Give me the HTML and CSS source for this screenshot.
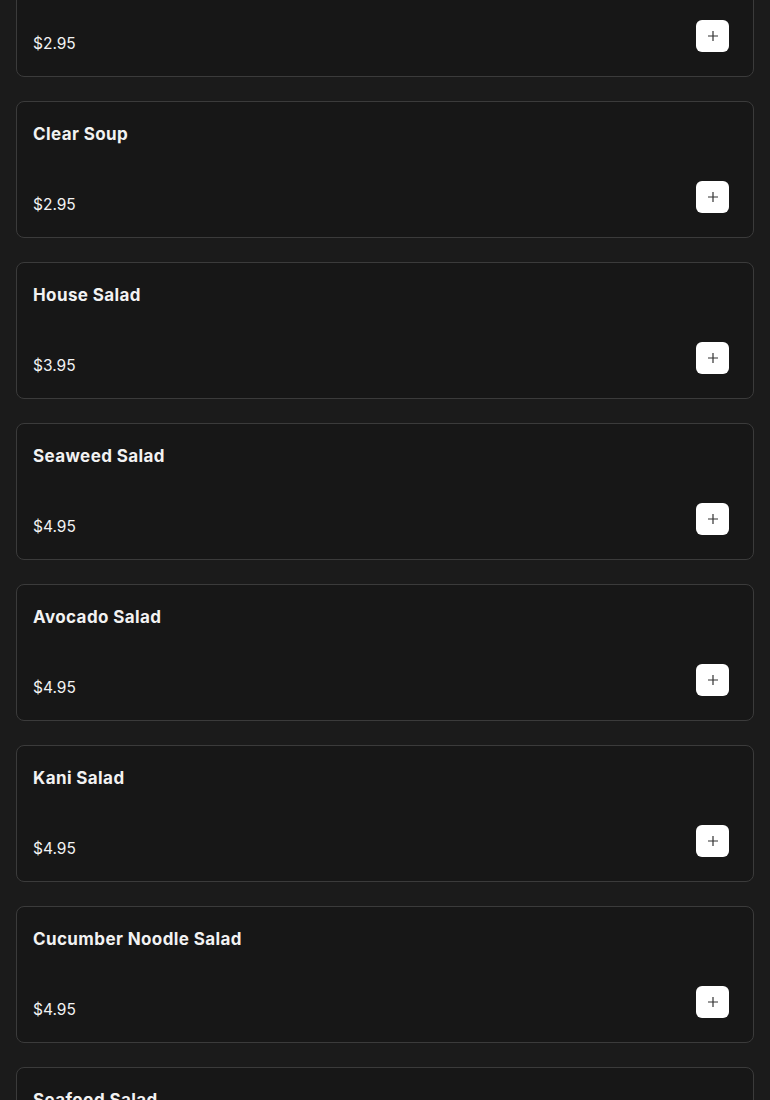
FILE: index.html
```html
<!DOCTYPE html>
<html lang="en">
<head>
    <meta charset="UTF-8">
    <meta name="viewport" content="width=device-width, initial-scale=1.0">
    <title>Menu</title>
    <link rel="stylesheet" href="styles.css">
</head>
<body>
    <div class="menu-list">
        <div class="item">
            <h3 class="item-name">Miso Soup</h3>
            <div class="item-foot">
                <span class="item-price">$2.95</span>
                <button class="add-btn" aria-label="Add"><svg viewBox="0 0 12 12" width="12" height="12"><path d="M6 1v10M1 6h10" stroke="#333" stroke-width="1.2" fill="none"/></svg></button>
            </div>
        </div>
        <div class="item">
            <h3 class="item-name">Clear Soup</h3>
            <div class="item-foot">
                <span class="item-price">$2.95</span>
                <button class="add-btn" aria-label="Add"><svg viewBox="0 0 12 12" width="12" height="12"><path d="M6 1v10M1 6h10" stroke="#333" stroke-width="1.2" fill="none"/></svg></button>
            </div>
        </div>
        <div class="item">
            <h3 class="item-name">House Salad</h3>
            <div class="item-foot">
                <span class="item-price">$3.95</span>
                <button class="add-btn" aria-label="Add"><svg viewBox="0 0 12 12" width="12" height="12"><path d="M6 1v10M1 6h10" stroke="#333" stroke-width="1.2" fill="none"/></svg></button>
            </div>
        </div>
        <div class="item">
            <h3 class="item-name">Seaweed Salad</h3>
            <div class="item-foot">
                <span class="item-price">$4.95</span>
                <button class="add-btn" aria-label="Add"><svg viewBox="0 0 12 12" width="12" height="12"><path d="M6 1v10M1 6h10" stroke="#333" stroke-width="1.2" fill="none"/></svg></button>
            </div>
        </div>
        <div class="item">
            <h3 class="item-name">Avocado Salad</h3>
            <div class="item-foot">
                <span class="item-price">$4.95</span>
                <button class="add-btn" aria-label="Add"><svg viewBox="0 0 12 12" width="12" height="12"><path d="M6 1v10M1 6h10" stroke="#333" stroke-width="1.2" fill="none"/></svg></button>
            </div>
        </div>
        <div class="item">
            <h3 class="item-name">Kani Salad</h3>
            <div class="item-foot">
                <span class="item-price">$4.95</span>
                <button class="add-btn" aria-label="Add"><svg viewBox="0 0 12 12" width="12" height="12"><path d="M6 1v10M1 6h10" stroke="#333" stroke-width="1.2" fill="none"/></svg></button>
            </div>
        </div>
        <div class="item">
            <h3 class="item-name">Cucumber Noodle Salad</h3>
            <div class="item-foot">
                <span class="item-price">$4.95</span>
                <button class="add-btn" aria-label="Add"><svg viewBox="0 0 12 12" width="12" height="12"><path d="M6 1v10M1 6h10" stroke="#333" stroke-width="1.2" fill="none"/></svg></button>
            </div>
        </div>
        <div class="item">
            <h3 class="item-name">Seafood Salad</h3>
            <div class="item-foot">
                <span class="item-price">$6.95</span>
                <button class="add-btn" aria-label="Add"><svg viewBox="0 0 12 12" width="12" height="12"><path d="M6 1v10M1 6h10" stroke="#333" stroke-width="1.2" fill="none"/></svg></button>
            </div>
        </div>
    </div>
</body>
</html>
```

FILE: styles.css
```css
body {
    margin: 0;
    background-color: #1b1b1b;
    font-family: Inter, 'Noto Sans', sans-serif;
    color: #f2f2f2;
    overflow: hidden;
}
.menu-list {
    display: flex;
    flex-direction: column;
    gap: 24px;
    padding: 0 16px;
    margin-top: -60px;
}
.item {
    display: flex;
    flex-direction: column;
    height: 137px;
    box-sizing: border-box;
    padding: 17px 24px 16px 16px;
    background-color: #171717;
    border: 1px solid #3b3b3b;
    border-radius: 8px;
}
.item-name {
    margin: 0;
    font-size: 17px;
    font-weight: 700;
    line-height: 30px;
    letter-spacing: 0.4px;
}
.item-foot {
    display: flex;
    justify-content: space-between;
    align-items: flex-start;
    margin-top: auto;
    height: 40px;
}
.item-price {
    margin-top: 11px;
    font-size: 15.5px;
    line-height: 26px;
}
.add-btn {
    width: 33px;
    height: 32px;
    padding: 0;
    border: none;
    border-radius: 6px;
    background-color: #ffffff;
    display: flex;
    align-items: center;
    justify-content: center;
    cursor: pointer;
}
```
